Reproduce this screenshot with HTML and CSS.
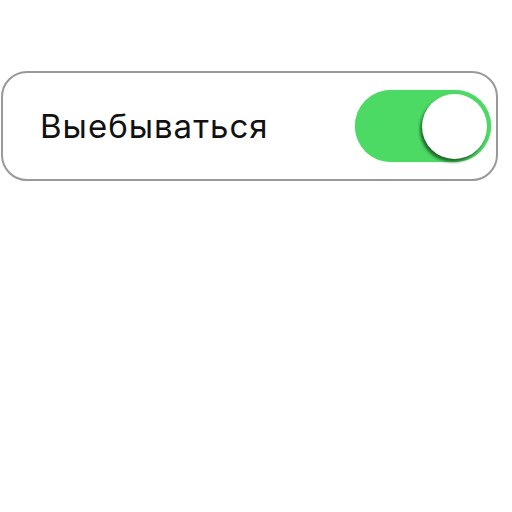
FILE: index.html
```html
<!DOCTYPE html>
<html>
    <head>
        <meta charset="utf-8">
        <link rel="stylesheet" href="styles.css">
    </head>
    <body>
        <div class="row">
            <label class="title">Выебываться</label>
            <div class="switch on">
                <div class="knob"></div>
            </div>
        </div>
    </body>
</html>
```

FILE: styles.css
```css
body {
    margin: 0;
    background: #fff;
    font-family: 'Inter', 'Liberation Sans', Arial, sans-serif;
}

.row {
    box-sizing: border-box;
    margin: 71px 0 0 1px;
    width: 497px;
    height: 110px;
    border: 2px solid #999;
    border-radius: 26px;
    display: flex;
    align-items: center;
    justify-content: space-between;
    padding: 0 5px 0 37px;
}

.title {
    font-size: 33px;
    letter-spacing: 1px;
    color: #111;
}

.switch {
    width: 136px;
    height: 72px;
    border-radius: 36px;
    background: #4cd964;
    display: flex;
    align-items: center;
    justify-content: flex-end;
    padding: 0 4px;
    box-sizing: border-box;
    box-shadow: 0 0 1px #4cd964;
}

.knob {
    width: 65px;
    height: 65px;
    border-radius: 50%;
    background: #fff;
    box-shadow: -2px 3px 3px #1f6b2c;
}
```
